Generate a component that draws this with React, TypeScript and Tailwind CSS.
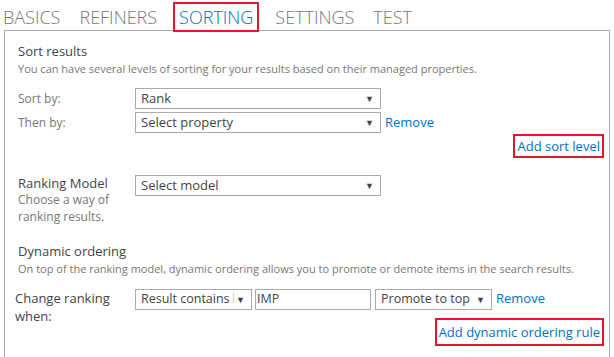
import React from 'react'

const FONT = { fontFamily: '"Open Sans", "Noto Sans", Arial, sans-serif' }

const TABS = ['BASICS', 'REFINERS', 'SORTING', 'SETTINGS', 'TEST']

function Caret() {
  return <span className="shrink-0 pl-[2px] text-[9px] leading-none text-[#444]">▼</span>
}

function Select({ value, className }: { value: string; className: string }) {
  return (
    <div className={`flex h-[21px] items-center overflow-hidden border border-[#ababab] bg-white pl-[5px] pr-[6px] text-[#444] ${className}`}>
      <span className="min-w-0 flex-1 overflow-hidden whitespace-nowrap">{value}</span>
      <Caret />
    </div>
  )
}

export default function App() {
  return (
    <div className="h-[357px] w-[614px] overflow-hidden bg-white" style={FONT}>
      {/* Tabs */}
      <div className="relative z-10 flex h-[30px] items-start gap-[19px] pl-[3px] pt-[2px] text-[18px] font-light leading-none text-[#777]">
        {TABS.map((tab) =>
          tab === 'SORTING' ? (
            <span key={tab} className="-mx-[3px] flex h-[30px] items-center border-2 border-[#e0182d] bg-white px-[4px] text-[#0072c6]">
              {tab}
            </span>
          ) : (
            <span key={tab} className="flex h-[30px] items-center">{tab}</span>
          ),
        )}
      </div>

      {/* Panel */}
      <div className="ml-[4px] h-[340px] w-[606px] border border-[#ababab] pl-[13px] pr-[5px] pt-[12px] text-[13px] text-[#444]">
        <p className="leading-[16px]">Sort results</p>
        <p className="mt-[2px] text-[11px] leading-[15px] text-[#777]">
          You can have several levels of sorting for your results based on their managed properties.
        </p>

        <div className="mt-[12px] flex items-center">
          <span className="w-[117px] text-[12px] text-[#777]">Sort by:</span>
          <Select value="Rank" className="w-[246px] text-[13px]" />
        </div>
        <div className="mt-[3px] flex items-center">
          <span className="w-[117px] text-[12px] text-[#777]">Then by:</span>
          <Select value="Select property" className="w-[246px] text-[13px]" />
          <a className="ml-[4px] text-[#0072c6]">Remove</a>
        </div>
        <div className="mt-[1px] flex justify-end">
          <a className="border-2 border-[#e0182d] px-[2px] py-[1px] leading-[18px] text-[#0072c6]">Add sort level</a>
        </div>

        <div className="mt-[17px] flex items-start">
          <div className="w-[117px]">
            <p className="leading-[16px]">Ranking Model</p>
            <p className="text-[12px] leading-[17px] text-[#777]">Choose a way of<br />ranking results.</p>
          </div>
          <Select value="Select model" className="w-[246px] text-[13px]" />
        </div>

        <p className="mt-[18px] leading-[16px]">Dynamic ordering</p>
        <p className="mt-[2px] text-[11px] leading-[15px] text-[#777]">
          On top of the ranking model, dynamic ordering allows you to promote or demote items in the search results.
        </p>

        <div className="-ml-[3px] mt-[13px] flex items-start">
          <p className="w-[120px] leading-[18px]">Change ranking<br />when:</p>
          <Select value="Result contains k" className="w-[117px] text-[12.5px]" />
          <div className="ml-[3px] flex h-[21px] w-[116px] items-center border border-[#ababab] px-[1px] text-[12.5px]">IMP</div>
          <Select value="Promote to top" className="ml-[4px] w-[117px] text-[12.5px]" />
          <a className="ml-[4px] leading-[18px] text-[#0072c6]">Remove</a>
        </div>
        <div className="-mt-[7px] flex justify-end">
          <a className="border-2 border-[#e0182d] px-[2px] py-[3px] leading-[18px] text-[#0072c6]">Add dynamic ordering rule</a>
        </div>
      </div>
    </div>
  )
}
